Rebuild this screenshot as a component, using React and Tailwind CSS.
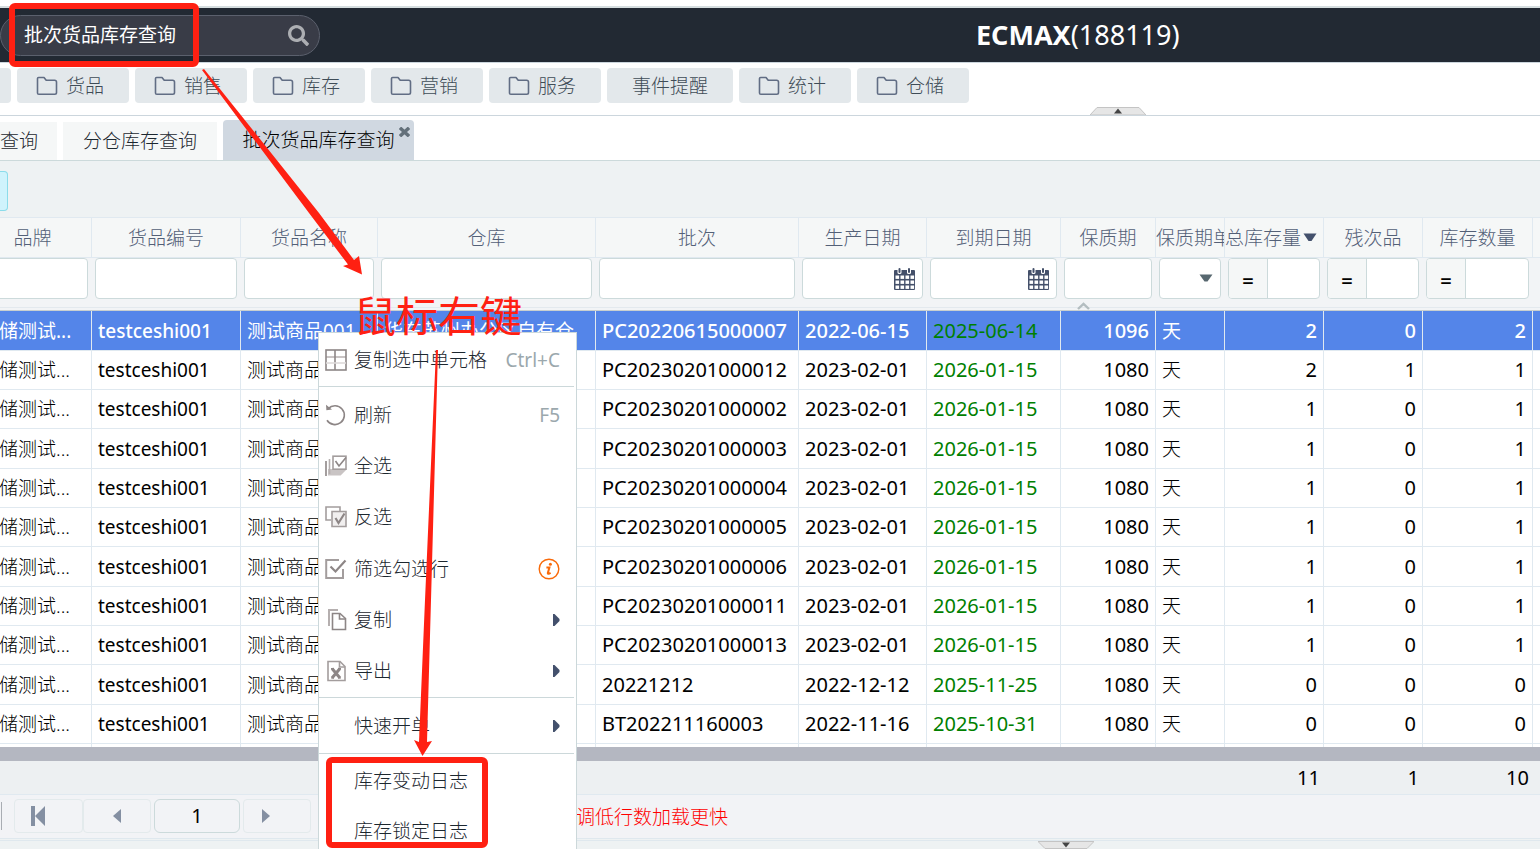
import React, { useState } from "react";
import { FaSearch } from "react-icons/fa";

const NAV_ITEMS = [
  { label: "货品", folder: true },
  { label: "销售", folder: true },
  { label: "库存", folder: true },
  { label: "营销", folder: true },
  { label: "服务", folder: true },
  { label: "事件提醒", folder: false },
  { label: "统计", folder: true },
  { label: "仓储", folder: true },
];

const COLUMNS = [
  { key: "brand", title: "品牌", filter: "text" },
  { key: "code", title: "货品编号", filter: "text" },
  { key: "name", title: "货品名称", filter: "text" },
  { key: "warehouse", title: "仓库", filter: "text" },
  { key: "batch", title: "批次", filter: "text" },
  { key: "produced", title: "生产日期", filter: "date" },
  { key: "expires", title: "到期日期", filter: "date" },
  { key: "shelf", title: "保质期", filter: "text", align: "right" },
  { key: "unit", title: "保质期单位", filter: "select" },
  { key: "total", title: "总库存量", filter: "number", align: "right" },
  { key: "defect", title: "残次品", filter: "number", align: "right" },
  { key: "quantity", title: "库存数量", filter: "number", align: "right" },
];

const ROWS = [
  ["PC20220615000007", "2022-06-15", "2025-06-14", 1096, 2, 0, 2],
  ["PC20230201000012", "2023-02-01", "2026-01-15", 1080, 2, 1, 1],
  ["PC20230201000002", "2023-02-01", "2026-01-15", 1080, 1, 0, 1],
  ["PC20230201000003", "2023-02-01", "2026-01-15", 1080, 1, 0, 1],
  ["PC20230201000004", "2023-02-01", "2026-01-15", 1080, 1, 0, 1],
  ["PC20230201000005", "2023-02-01", "2026-01-15", 1080, 1, 0, 1],
  ["PC20230201000006", "2023-02-01", "2026-01-15", 1080, 1, 0, 1],
  ["PC20230201000011", "2023-02-01", "2026-01-15", 1080, 1, 0, 1],
  ["PC20230201000013", "2023-02-01", "2026-01-15", 1080, 1, 0, 1],
  ["20221212", "2022-12-12", "2025-11-25", 1080, 0, 0, 0],
  ["BT202211160003", "2022-11-16", "2025-10-31", 1080, 0, 0, 0],
].map(([batch, produced, expires, shelf, total, defect, quantity]) => ({
  brand: "仓储测试...",
  code: "testceshi001",
  name: "测试商品001",
  warehouse: "华东苏州办公区自有仓",
  batch,
  produced,
  expires,
  shelf,
  unit: "天",
  total,
  defect,
  quantity,
}));

const FolderIcon = () => (
  <svg className="h-5 w-[22px] shrink-0" viewBox="0 0 22 20" fill="none" stroke="#616d84" strokeWidth="1.6" strokeLinejoin="round">
    <path d="M1.5 17V2.6Q1.5 1.5 2.6 1.5H8L10.2 4.3H18.6Q20.5 4.3 20.5 6V16.6Q20.5 18.3 18.8 18.3H2.8Q1.5 18.3 1.5 17Z" />
  </svg>
);

const CalendarIcon = () => (
  <svg className="pointer-events-none absolute top-[10px] right-2 h-[22px] w-[21px]" viewBox="0 0 21 22">
    <rect x="0" y="2" width="21" height="20" rx="1" fill="#44506a" />
    <g fill="#fff">
      {[8, 13, 18].map((y) =>
        [2, 7, 12, 17].map((x) => <rect key={`${x}-${y}`} x={x - 0.5} y={y - 0.5} width="3.6" height="3.4" />)
      )}
      <rect x="3.5" y="0" width="4" height="6" rx="1.5" />
      <rect x="13" y="0" width="4" height="6" rx="1.5" />
    </g>
    <rect x="4.5" y="0" width="2" height="5" rx="1" fill="#44506a" />
    <rect x="14" y="0" width="2" height="5" rx="1" fill="#44506a" />
  </svg>
);

const RightArrow = () => (
  <svg className="h-3 w-2" viewBox="0 0 8 12">
    <path d="M1 0H2.500L7.500 5V7L2.500 12H1Z" fill="#43506c" />
  </svg>
);

const MenuIcon = ({ name }) => {
  const shapes = {
    grid: (
      <>
        <path d="M1 8H21" stroke="#c9c4c4" strokeWidth="2" />
        <rect x="1" y="1" width="20" height="20" />
        <path d="M10 1V21" />
        <path d="M1 14H21" stroke="#dedada" />
      </>
    ),
    refresh: (
      <>
        <path d="M3.2 4.6A9.4 9.4 0 1 1 2 16.2" />
        <path d="M1 0.8L1.4 6.2L7 5.4Z" fill="#8d8686" stroke="none" />
      </>
    ),
    all: (
      <>
        <path d="M4.5 14V19H15L20 14" fill="#c9c4c4" stroke="#c9c4c4" strokeWidth="3" />
        <path d="M1 6V21" />
        <path d="M4.5 4V19" stroke="#b5afaf" />
        <rect x="8" y="1.2" width="13" height="13" fill="#fff" stroke="#a39d9d" />
        <path d="M10.5 6L14 11L21 2.4" />
      </>
    ),
    invert: (
      <>
        <path d="M6 14H1V1H15V5" stroke="#a39d9d" />
        <path d="M7 20.5H21V5.5H7Z" stroke="#a39d9d" fill="#f1efef" />
        <path d="M10.5 12L13.5 17L19.5 7.5" strokeWidth="2.2" />
      </>
    ),
    filter: (
      <>
        <path d="M14 2H1.2V20H18V11" stroke="#a39d9d" strokeWidth="2" />
        <path d="M5.5 8.5L10.5 13.5L20.5 2.5" strokeWidth="2.2" />
      </>
    ),
    copy: (
      <>
        <path d="M4 17V1H13" stroke="#b5afaf" strokeWidth="2" />
        <path d="M7.5 20.5V4.5H15L20.5 9.5V20.5Z" />
        <path d="M14.5 4.5V10H20.5" />
      </>
    ),
    export: (
      <>
        <path d="M3 20.5V1.5H15L20 6.5V20.5Z" stroke="#a39d9d" />
        <path d="M14.5 2V7H20" stroke="#a39d9d" />
        <path d="M7 8.5L15 18M15 8.5L7 18" strokeWidth="3" />
        <path d="M6 8.5H9M13 8.5H16M6 18H9M13 18H16" strokeWidth="1.2" />
      </>
    ),
  };
  return (
    <svg className="h-[22px] w-[22px] shrink-0" viewBox="0 0 22 22" fill="none" stroke="#8d8686" strokeWidth="1.6">
      {shapes[name]}
    </svg>
  );
};

const InfoIcon = () => (
  <svg className="h-[22px] w-[22px]" viewBox="0 0 22 22" fill="none" stroke="#f96a0a">
    <circle cx="11" cy="11" r="9.8" strokeWidth="1.4" />
    <circle cx="12.4" cy="6.2" r="1.5" fill="#f96a0a" stroke="none" />
    <path d="M8.4 9.6H11.4L9.8 15.2Q9.9 16.4 12.6 14.8" strokeWidth="2" />
  </svg>
);

const MenuItem = ({ icon, label, hint, children }) => (
  <button type="button" role="menuitem" className="flex w-full items-center pr-3.5 pl-1.5 text-left text-[19px] leading-6 font-light text-[#1c272f]">
    {icon ? <MenuIcon name={icon} /> : <span className="w-[22px]" />}
    <span className="ml-[7px] grow">{label}</span>
    {hint && <span className="font-normal text-[#9ba8ad]">{hint}</span>}
    {children}
  </button>
);

const ContextMenu = () => (
  <div role="menu" className="absolute top-[332px] left-[318px] w-[259px] border border-[#ccd8da] bg-white">
    <div className="mr-0.5 grid h-[54px] border-b border-[#ccd8da]">
      <MenuItem icon="grid" label="复制选中单元格" hint="Ctrl+C" />
    </div>
    <div className="mr-0.5 grid h-[311px] grid-rows-6 border-b border-[#ccd8da] pt-0.5">
      <MenuItem icon="refresh" label="刷新" hint="F5" />
      <MenuItem icon="all" label="全选" />
      <MenuItem icon="invert" label="反选" />
      <MenuItem icon="filter" label="筛选勾选行">
        <InfoIcon />
      </MenuItem>
      <MenuItem icon="copy" label="复制">
        <RightArrow />
      </MenuItem>
      <MenuItem icon="export" label="导出">
        <RightArrow />
      </MenuItem>
    </div>
    <div className="mr-0.5 grid h-14 border-b border-[#ccd8da]">
      <MenuItem label="快速开单">
        <RightArrow />
      </MenuItem>
    </div>
    <div className="grid h-[102px] grid-rows-2 pt-0.5">
      <MenuItem label="库存变动日志" />
      <MenuItem label="库存锁定日志" />
    </div>
  </div>
);

const Annotations = () => (
  <div className="pointer-events-none absolute inset-0">
    <div className="absolute top-[3px] left-[9px] h-16 w-[190px] rounded-md border-[6px] border-[#ff2012]" />
    <div className="absolute top-[757px] left-[326px] h-[91px] w-[162px] rounded-md border-[6px] border-[#ff2012]" />
    <div className="absolute top-[292px] left-[354px] text-[42px] leading-[48px] text-[#ff2012]">鼠标右键</div>
    <svg className="absolute top-0 left-0 h-[849px] w-[600px]" viewBox="0 0 600 849" fill="#ff2012">
      <path d="M202 70L204 69L319 213L354 260L359 256L362 274.500L343 266L348 264.500L309 213Z" />
      <path d="M436 350H438L431 600L427 742L432 741L422.500 756L414 740L419 742L425 600Z" />
    </svg>
  </div>
);

const GridColumns = () => (
  <colgroup>
    <col className="w-[118px]" />
    <col className="w-[149px]" />
    <col className="w-[137px]" />
    <col className="w-[218px]" />
    <col className="w-[203px]" />
    <col className="w-[128px]" />
    <col className="w-[134px]" />
    <col className="w-[95px]" />
    <col className="w-[69px]" />
    <col className="w-[99px]" />
    <col className="w-[99px]" />
    <col className="w-[110px]" />
    <col />
  </colgroup>
);

const FilterField = ({ column }) => {
  const boxClass = "block h-[41px] w-full rounded-sm border border-[#ccdadb] bg-white px-2";

  if (column.filter === "select") {
    return (
      <div className="relative">
        <select aria-label={column.title} className={`${boxClass} appearance-none`}>
          <option value=""></option>
          <option value="day">天</option>
        </select>
        <svg className="pointer-events-none absolute top-4 right-2 h-[9px] w-[14px]" viewBox="0 0 14 9">
          <path d="M0.500 0.500H13.500L8.500 7.500H5.500Z" fill="#586870" />
        </svg>
      </div>
    );
  }
  if (column.filter === "number") {
    return (
      <div className="flex h-[41px] overflow-hidden rounded-sm border border-[#ccdadb] bg-white">
        <button type="button" className="w-[39px] shrink-0 border-r border-[#ccdadb] bg-[#f5f7f7] pt-1 text-[20px] leading-6 font-semibold text-black">=</button>
        <input aria-label={column.title} className="w-full min-w-0 px-1" />
      </div>
    );
  }
  return (
    <div className="relative">
      <input aria-label={column.title} className={boxClass} />
      {column.filter === "date" && <CalendarIcon />}
    </div>
  );
};

const cellClass = (column, selected) => {
  if (column.key === "expires") return "text-left text-[20px] font-normal text-[#008000]";
  const color = selected ? "text-white" : "text-black";
  if (["brand", "name", "warehouse", "unit"].includes(column.key)) {
    return `text-left text-[19px] ${selected ? "font-normal" : "font-light"} ${color}`;
  }
  if (column.key === "code") return `text-left text-[19px] ${color}`;
  return `${column.align === "right" ? "text-right" : "text-left"} text-[20px] ${color}`;
};

const StockGrid = () => {
  const [selectedRow, setSelectedRow] = useState(0);

  return (
    <div className="overflow-hidden bg-white">
      <table className="-ml-[26px] w-[calc(100%+26px)] table-fixed border-separate border-spacing-0">
        <GridColumns />
        <thead>
          <tr className="h-[41px] bg-[#f5f7f7]">
            {COLUMNS.map((column) => (
              <th
                key={column.key}
                className={`overflow-hidden border-y border-r border-[#e0e9f0] p-0 text-[19px] leading-6 font-light whitespace-nowrap text-[#536077] ${column.key === "unit" || column.key === "total" ? "text-left" : "text-center"}`}
              >
                {column.title}
                {column.key === "total" && (
                  <svg className="mb-1 ml-0.5 inline-block h-[9px] w-[14px]" viewBox="0 0 14 9">
                    <path d="M0.500 0.500H13.500L8.500 8H5.500Z" fill="#43506c" />
                  </svg>
                )}
              </th>
            ))}
            <th className="border-y border-[#e0e9f0] p-0" />
          </tr>
          <tr className="h-[53px] bg-[#f2f4f6]">
            {COLUMNS.map((column) => (
              <th key={column.key} className="relative border-b border-[#c9cfcf] p-0 align-top font-normal">
                <div className="h-[50px] border-b border-[#e3e9ee] pr-1 pl-[3px]">
                  <FilterField column={column} />
                </div>
                {column.key === "shelf" && (
                  <svg className="absolute bottom-0 left-4 h-2 w-[13px]" viewBox="0 0 13 8" fill="none" stroke="#b3bdc0" strokeWidth="2.4">
                    <path d="M1 7L6.500 1.800L12 7" />
                  </svg>
                )}
              </th>
            ))}
            <th className="border-b border-[#c9cfcf] p-0 align-top">
              <div className="h-[50px] border-b border-[#e3e9ee]" />
            </th>
          </tr>
        </thead>
        <tbody>
          {ROWS.map((row, index) => {
            const selected = index === selectedRow;
            return (
              <tr
                key={row.batch}
                onClick={() => setSelectedRow(index)}
                className={`h-[39px] nth-[3n+1]:h-10 ${selected ? "bg-[#5485e9] font-medium" : "bg-white"}`}
              >
                {COLUMNS.map((column) => (
                  <td
                    key={column.key}
                    className={`overflow-hidden border-r border-b border-[#e0e9f0] px-1.5 py-0 leading-6 whitespace-nowrap ${cellClass(column, selected)}`}
                  >
                    {row[column.key]}
                  </td>
                ))}
                <td className="border-b border-[#e0e9f0] p-0" />
              </tr>
            );
          })}
          <tr className="h-[3px]">
            {COLUMNS.map((column) => (
              <td key={column.key} className="border-r border-[#e0e9f0] p-0" />
            ))}
            <td className="p-0" />
          </tr>
        </tbody>
      </table>

      <div className="h-[14px] bg-[#b4b7c1]" />

      <table className="-ml-[26px] w-[calc(100%+26px)] table-fixed border-separate border-spacing-0 bg-[#edf0f2]">
        <GridColumns />
        <tbody>
          <tr className="h-[34px] text-right text-[20px] leading-6 text-black">
            <td colSpan={9} className="border-b border-[#e0e9f0] p-0" />
            <td className="border-b border-[#e0e9f0] px-1 py-0">11</td>
            <td className="border-b border-[#e0e9f0] px-1 py-0">1</td>
            <td className="border-b border-[#e0e9f0] px-1 py-0">10</td>
            <td className="border-b border-[#e0e9f0] p-0" />
          </tr>
        </tbody>
      </table>
    </div>
  );
};

const Pager = () => {
  const buttonClass = "flex h-[34px] items-center rounded-sm border border-[#e3eaec]";

  return (
    <div className="flex h-11 items-center border-b border-[#dfe8ee] bg-[#f2f3f6] pb-0.5">
      <div className="mr-3 ml-px h-7 w-px bg-[#a9adb3]" />
      <button type="button" aria-label="首页" className={`${buttonClass} w-[69px] pl-4`}>
        <svg className="h-5 w-[14px]" viewBox="0 0 14 20" fill="#848fa2">
          <path d="M0 0H4V20H0ZM14 0V20L4 10Z" />
        </svg>
      </button>
      <button type="button" aria-label="上一页" className={`${buttonClass} w-[68px] justify-center`}>
        <svg className="h-[14px] w-2" viewBox="0 0 8 14">
          <path d="M8 0V14L0 7Z" fill="#848fa2" />
        </svg>
      </button>
      <input aria-label="页码" defaultValue="1" className="mx-[3px] h-[34px] w-[86px] rounded-md border border-[#ccdadb] text-center text-[20px] text-black" />
      <button type="button" aria-label="下一页" className={`${buttonClass} w-[68px] pl-[18px]`}>
        <svg className="h-[14px] w-2" viewBox="0 0 8 14">
          <path d="M0 0V14L8 7Z" fill="#848fa2" />
        </svg>
      </button>
      <span className="ml-[265px] pt-0.5 text-[19px] leading-6 font-light text-[#ff0000]">调低行数加载更快</span>
    </div>
  );
};

export default function App() {
  const [keyword, setKeyword] = useState("批次货品库存查询");

  return (
    <div className="relative h-screen w-full overflow-hidden bg-[#eef2f3] font-['Noto_Sans','Noto_Sans_CJK_SC',sans-serif]">
      <div className="h-2 border-b-2 border-[#d6dee0] bg-white" />
      <header className="flex h-[54px] items-center bg-[#222933]">
        <div className="relative w-80">
          <input
            aria-label="搜索菜单"
            value={keyword}
            onChange={(event) => setKeyword(event.target.value)}
            className="block h-[41px] w-full rounded-full border border-[#5b606d] bg-[#393c47] pr-12 pb-[3px] pl-[23px] text-[19px] font-normal text-white outline-none"
          />
          <button type="button" aria-label="搜索" className="absolute top-[10px] right-[11px] text-[#acaeb2]">
            <FaSearch className="h-[21px] w-[21px]" />
          </button>
        </div>
        <h1 className="ml-[656px] text-[27px] leading-9 text-white">
          <b>ECMAX</b>(188119)
        </h1>
      </header>

      <nav className="relative flex h-[54px] gap-1.5 border-t border-b border-[#ccd6dd] bg-white pt-[5px]">
        <div className="h-[35px] w-[11px] rounded-r-sm bg-[#e3e8eb]" />
        {NAV_ITEMS.map((item) => (
          <button
            key={item.label}
            type="button"
            className={`flex h-[35px] items-center rounded-sm bg-[#e3e8eb] text-[19px] leading-6 font-light text-[#3f4c57] ${item.folder ? "w-28 gap-2 pl-[19px]" : "w-[126px] justify-center"}`}
          >
            {item.folder && <FolderIcon />}
            {item.label}
          </button>
        ))}
        <svg className="absolute bottom-0 left-[1090px] h-2 w-14" viewBox="0 0 56 8">
          <path d="M0 8L7 0.500H49L56 8Z" fill="#e6e6e6" stroke="#c4c4c4" />
          <path d="M24 6.500L28 1.500L32 6.500Z" fill="#444" />
        </svg>
      </nav>

      <div role="tablist" className="flex h-[45px] items-end gap-1.5 border-b border-[#ccdadb] bg-white text-[19px] leading-6 font-light text-[#1c272f]">
        <button type="button" role="tab" className="h-[38px] w-[57px] bg-[#f5f7f7] text-left">查询</button>
        <button type="button" role="tab" className="h-[38px] w-[154px] bg-[#f5f7f7]">分仓库存查询</button>
        <div className="relative">
          <button type="button" role="tab" aria-selected="true" className="block h-10 w-[191px] rounded-t-sm bg-[#d0d8e1] text-black">批次货品库存查询</button>
          <button type="button" aria-label="关闭" className="absolute top-[7px] right-1">
            <svg className="h-[10px] w-[11px]" viewBox="0 0 11 10" stroke="#63707a" strokeWidth="3.4">
              <path d="M1 0.800L10 9.200M10 0.800L1 9.200" />
            </svg>
          </button>
        </div>
      </div>

      <div className="flex h-14 items-center">
        <button type="button" aria-label="查询" className="mt-1 h-10 w-2 rounded-r-sm border border-l-0 border-[#8bdcea] bg-[#cff3fc]" />
      </div>

      <StockGrid />
      <Pager />

      <div className="relative mt-px border-t border-[#dfe8ee]">
        <svg className="absolute top-0 left-[1038px] h-2 w-14" viewBox="0 0 56 8">
          <path d="M0 0.500H56L49 7.500H7Z" fill="#e6e6e6" stroke="#c4c4c4" />
          <path d="M24 1.500H32L28 6.500Z" fill="#444" />
        </svg>
      </div>

      <ContextMenu />
      <Annotations />
    </div>
  );
}
